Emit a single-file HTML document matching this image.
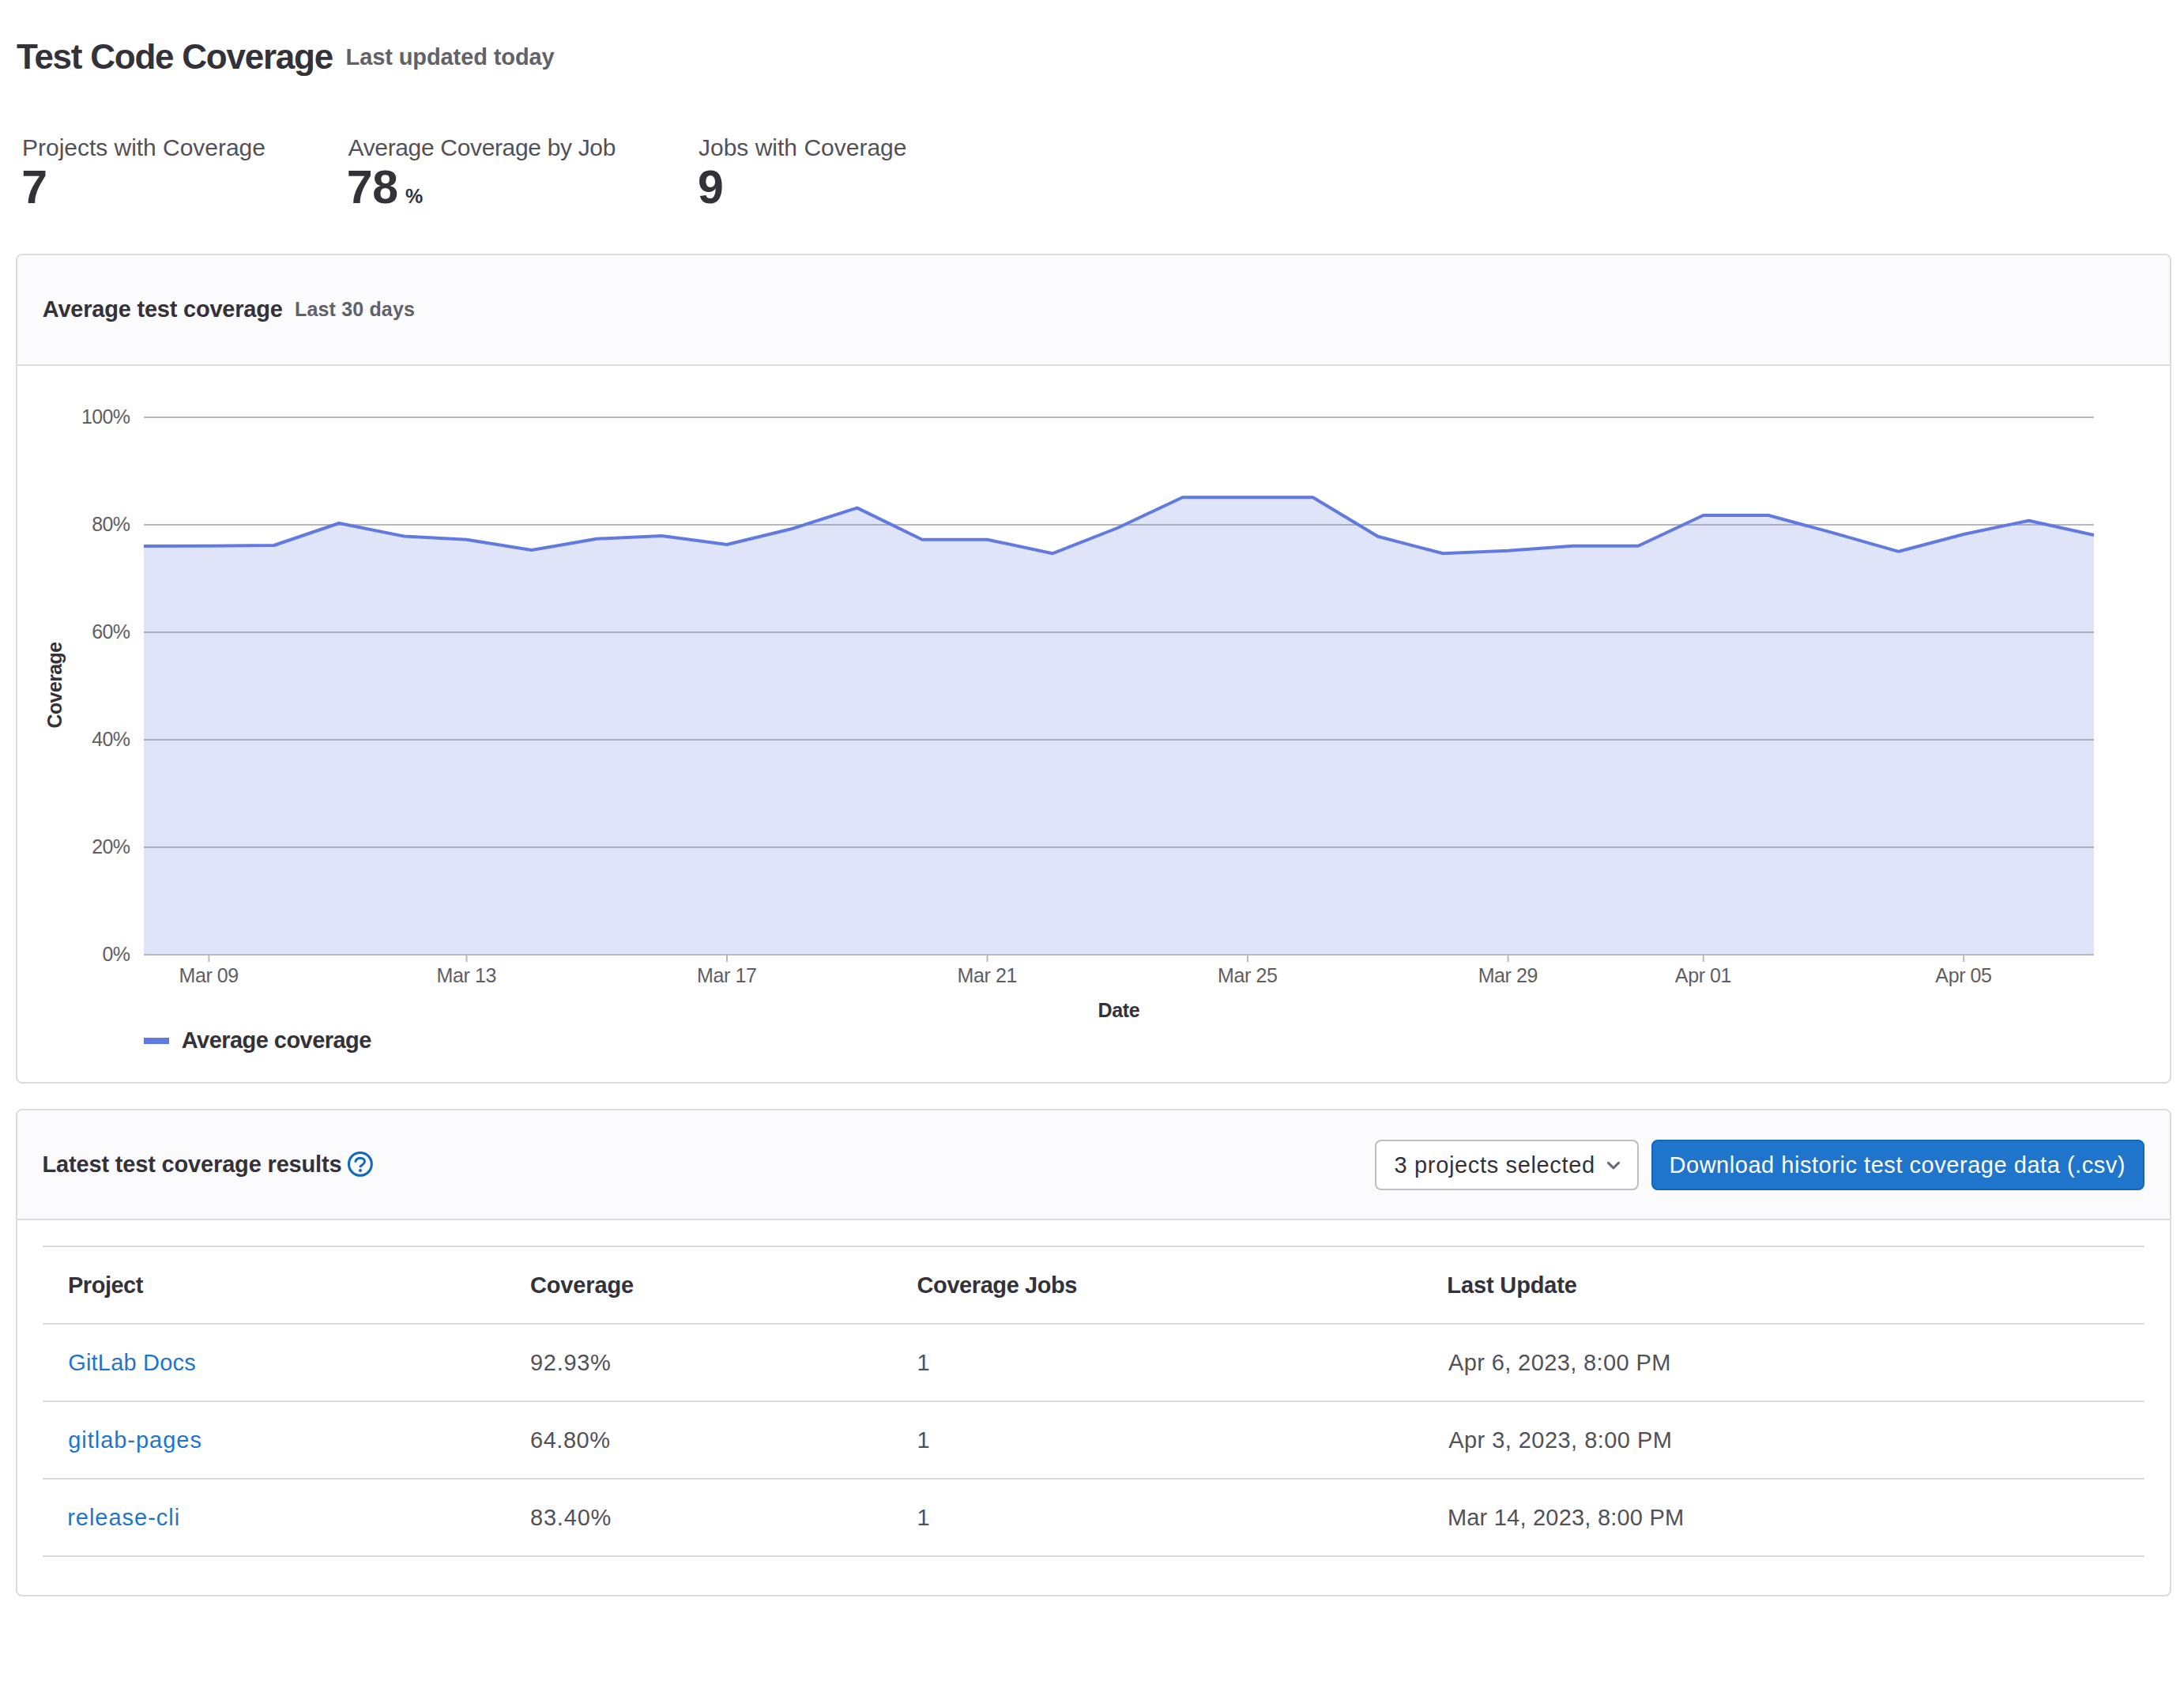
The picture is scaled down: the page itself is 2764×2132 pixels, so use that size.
<!DOCTYPE html>
<html><head><meta charset="utf-8"><title>Test Code Coverage</title>
<style>
html,body{margin:0;padding:0;background:#fff}
body{width:2764px;height:2132px;position:relative;overflow:hidden;font-family:"Liberation Sans", sans-serif}
.t{position:absolute;white-space:nowrap;line-height:1}
.r{position:absolute}
.card{position:absolute;border:2px solid #dcdcde;border-radius:8px;background:#fff}
</style></head><body>
<div class="card" style="left:20px;top:321px;width:2724px;height:1046px;"></div>
<div class="r" style="left:22px;top:323px;width:2724px;height:138px;background:#fbfafd;border-radius:6px 6px 0 0"></div>
<div class="r" style="left:22px;top:461px;width:2724px;height:2px;background:#dcdcde"></div>
<div class="card" style="left:20px;top:1403px;width:2724px;height:613px;"></div>
<div class="r" style="left:22px;top:1405px;width:2724px;height:137px;background:#fbfafd;border-radius:6px 6px 0 0"></div>
<div class="r" style="left:22px;top:1542px;width:2724px;height:2px;background:#dcdcde"></div>
<svg class="r" style="left:0;top:0" width="2764" height="1400" viewBox="0 0 2764 1400">
<rect x="182" y="527" width="2468" height="2" fill="#bab9be"/>
<rect x="182" y="663" width="2468" height="2" fill="#bab9be"/>
<rect x="182" y="799" width="2468" height="2" fill="#bab9be"/>
<rect x="182" y="935" width="2468" height="2" fill="#bab9be"/>
<rect x="182" y="1071" width="2468" height="2" fill="#bab9be"/>
<polygon points="182,1208 182.00,691.00 264.38,690.70 346.76,690.00 429.14,662.00 511.52,678.50 590.47,682.70 672.85,696.00 755.24,681.70 837.62,678.00 920.00,689.00 1002.38,669.00 1084.76,642.60 1167.14,682.70 1249.52,682.70 1331.90,700.30 1414.28,668.00 1496.66,629.20 1579.05,629.20 1661.43,629.20 1743.81,678.80 1826.19,700.30 1908.57,696.80 1990.95,690.70 2073.33,690.70 2155.71,652.00 2238.09,652.00 2320.48,674.40 2402.86,697.80 2485.24,676.00 2567.62,658.70 2650.00,677.00 2650,1208" fill="#617ae2" fill-opacity="0.2"/>
<rect x="182" y="1207" width="2468" height="2" fill="#bab9be"/>
<rect x="263.38" y="1209" width="2" height="8" fill="#bab9be"/>
<rect x="589.47" y="1209" width="2" height="8" fill="#bab9be"/>
<rect x="919.00" y="1209" width="2" height="8" fill="#bab9be"/>
<rect x="1248.52" y="1209" width="2" height="8" fill="#bab9be"/>
<rect x="1578.05" y="1209" width="2" height="8" fill="#bab9be"/>
<rect x="1907.57" y="1209" width="2" height="8" fill="#bab9be"/>
<rect x="2154.71" y="1209" width="2" height="8" fill="#bab9be"/>
<rect x="2484.24" y="1209" width="2" height="8" fill="#bab9be"/>
<polyline points="182.00,691.00 264.38,690.70 346.76,690.00 429.14,662.00 511.52,678.50 590.47,682.70 672.85,696.00 755.24,681.70 837.62,678.00 920.00,689.00 1002.38,669.00 1084.76,642.60 1167.14,682.70 1249.52,682.70 1331.90,700.30 1414.28,668.00 1496.66,629.20 1579.05,629.20 1661.43,629.20 1743.81,678.80 1826.19,700.30 1908.57,696.80 1990.95,690.70 2073.33,690.70 2155.71,652.00 2238.09,652.00 2320.48,674.40 2402.86,697.80 2485.24,676.00 2567.62,658.70 2650.00,677.00" fill="none" stroke="#617ae2" stroke-width="4" stroke-linejoin="round"/>
<rect x="182" y="1313" width="32" height="8" fill="#617ae2"/>
</svg>
<div class="t" style="right:2599.7px;top:514.5px;font-size:25px;color:#5f5e64;letter-spacing:-0.667px">100%</div>
<div class="t" style="right:2599.7px;top:650.5px;font-size:25px;color:#5f5e64;letter-spacing:-0.667px">80%</div>
<div class="t" style="right:2599.7px;top:786.5px;font-size:25px;color:#5f5e64;letter-spacing:-0.667px">60%</div>
<div class="t" style="right:2599.7px;top:922.5px;font-size:25px;color:#5f5e64;letter-spacing:-0.667px">40%</div>
<div class="t" style="right:2599.7px;top:1058.5px;font-size:25px;color:#5f5e64;letter-spacing:-0.667px">20%</div>
<div class="t" style="right:2599.7px;top:1194.5px;font-size:25px;color:#5f5e64;letter-spacing:-0.667px">0%</div>
<div class="t" style="left:114.2px;width:300px;text-align:center;top:1222.0px;font-size:25px;color:#5f5e64;letter-spacing:-0.400px">Mar 09</div>
<div class="t" style="left:440.3px;width:300px;text-align:center;top:1222.0px;font-size:25px;color:#5f5e64;letter-spacing:-0.400px">Mar 13</div>
<div class="t" style="left:769.8px;width:300px;text-align:center;top:1222.0px;font-size:25px;color:#5f5e64;letter-spacing:-0.400px">Mar 17</div>
<div class="t" style="left:1099.3px;width:300px;text-align:center;top:1222.0px;font-size:25px;color:#5f5e64;letter-spacing:-0.400px">Mar 21</div>
<div class="t" style="left:1428.8px;width:300px;text-align:center;top:1222.0px;font-size:25px;color:#5f5e64;letter-spacing:-0.400px">Mar 25</div>
<div class="t" style="left:1758.4px;width:300px;text-align:center;top:1222.0px;font-size:25px;color:#5f5e64;letter-spacing:-0.400px">Mar 29</div>
<div class="t" style="left:2005.5px;width:300px;text-align:center;top:1222.0px;font-size:25px;color:#5f5e64;letter-spacing:-0.400px">Apr 01</div>
<div class="t" style="left:2335.0px;width:300px;text-align:center;top:1222.0px;font-size:25px;color:#5f5e64;letter-spacing:-0.400px">Apr 05</div>
<div class="t" style="left:-80.2px;width:300px;text-align:center;top:853.5px;height:26px;font-size:25px;font-weight:700;color:#333238;letter-spacing:-0.63px;transform:rotate(-90deg)">Coverage</div>
<svg class="r" style="left:440px;top:1457px" width="32" height="32" viewBox="0 0 16 16"><circle cx="7.95" cy="7.95" r="7.2" fill="none" stroke="#1068bf" stroke-width="1.55"/><path d="M4.95 6.2C5.45 4.85 6.55 4.15 8 4.15c1.55 0 2.75.95 2.75 2.15 0 1-.7 1.6-1.45 2.15L8.05 9.4" fill="none" stroke="#1068bf" stroke-width="1.5" stroke-linecap="round" stroke-linejoin="round"/><circle cx="8" cy="11.95" r="1.0" fill="#1068bf"/></svg>
<div class="r" style="left:1740px;top:1442px;width:330px;height:60px;border:2px solid #bfbfc3;border-radius:8px;background:#fff"></div>
<svg class="r" style="left:2030px;top:1466px" width="24" height="18" viewBox="0 0 24 18"><path d="M5.4 5.4 L12 11.8 L18.5 5.4" fill="none" stroke="#6a696f" stroke-width="3" stroke-linecap="round" stroke-linejoin="round"/></svg>
<div class="r" style="left:2090px;top:1442px;width:620px;height:60px;border:2px solid #1068bf;border-radius:8px;background:#1f75cb"></div>
<div class="r" style="left:54px;top:1576px;width:2660px;height:2px;background:#dcdcde"></div>
<div class="r" style="left:54px;top:1674px;width:2660px;height:2px;background:#dcdcde"></div>
<div class="r" style="left:54px;top:1772px;width:2660px;height:2px;background:#dcdcde"></div>
<div class="r" style="left:54px;top:1870px;width:2660px;height:2px;background:#dcdcde"></div>
<div class="r" style="left:54px;top:1968px;width:2660px;height:2px;background:#dcdcde"></div>
<div class="t" style="left:21.0px;top:50.0px;font-size:44px;font-weight:700;color:#333238;letter-spacing:-1.235px">Test Code Coverage</div>
<div class="t" style="left:437.6px;top:58.0px;font-size:29px;font-weight:700;color:#626168;letter-spacing:-0.106px">Last updated today</div>
<div class="t" style="left:28.1px;top:171.8px;font-size:30px;font-weight:400;color:#535158;letter-spacing:-0.029px">Projects with Coverage</div>
<div class="t" style="left:440.5px;top:171.8px;font-size:30px;font-weight:400;color:#535158;letter-spacing:-0.341px">Average Coverage by Job</div>
<div class="t" style="left:884.0px;top:171.8px;font-size:30px;font-weight:400;color:#535158;letter-spacing:0.000px">Jobs with Coverage</div>
<div class="t" style="left:27.2px;top:208.0px;font-size:59px;font-weight:700;color:#333238;letter-spacing:0.000px">7</div>
<div class="t" style="left:438.8px;top:207.7px;font-size:59px;font-weight:700;color:#333238;letter-spacing:-0.400px">78</div>
<div class="t" style="left:513.0px;top:235.7px;font-size:25px;font-weight:700;color:#333238;letter-spacing:0.000px">%</div>
<div class="t" style="left:882.9px;top:208.0px;font-size:59px;font-weight:700;color:#333238;letter-spacing:0.000px">9</div>
<div class="t" style="left:53.8px;top:377.0px;font-size:29px;font-weight:700;color:#333238;letter-spacing:-0.220px">Average test coverage</div>
<div class="t" style="left:373.0px;top:379.0px;font-size:25px;font-weight:700;color:#626168;letter-spacing:0.164px">Last 30 days</div>
<div class="t" style="left:229.8px;top:1302.0px;font-size:29px;font-weight:700;color:#333238;letter-spacing:-0.547px">Average coverage</div>
<div class="t" style="left:53.5px;top:1459.0px;font-size:29px;font-weight:700;color:#333238;letter-spacing:-0.167px">Latest test coverage results</div>
<div class="t" style="left:1764.6px;top:1459.6px;font-size:29px;font-weight:400;color:#333238;letter-spacing:0.650px">3 projects selected</div>
<div class="t" style="left:2112.5px;top:1460.0px;font-size:29px;font-weight:400;color:#ffffff;letter-spacing:0.536px">Download historic test coverage data (.csv)</div>
<div class="t" style="left:86.0px;top:1612.0px;font-size:29px;font-weight:700;color:#333238;letter-spacing:-0.483px">Project</div>
<div class="t" style="left:671.0px;top:1612.0px;font-size:29px;font-weight:700;color:#333238;letter-spacing:-0.143px">Coverage</div>
<div class="t" style="left:1160.6px;top:1612.0px;font-size:29px;font-weight:700;color:#333238;letter-spacing:-0.425px">Coverage Jobs</div>
<div class="t" style="left:1831.3px;top:1612.0px;font-size:29px;font-weight:700;color:#333238;letter-spacing:-0.130px">Last Update</div>
<div class="t" style="left:86.2px;top:1710.0px;font-size:29px;font-weight:400;color:#1f75cb;letter-spacing:0.200px">GitLab Docs</div>
<div class="t" style="left:86.2px;top:1808.2px;font-size:29px;font-weight:400;color:#1f75cb;letter-spacing:0.973px">gitlab-pages</div>
<div class="t" style="left:85.2px;top:1906.0px;font-size:29px;font-weight:400;color:#1f75cb;letter-spacing:0.980px">release-cli</div>
<div class="t" style="left:671.0px;top:1710.0px;font-size:29px;font-weight:400;color:#535158;letter-spacing:0.700px">92.93%</div>
<div class="t" style="left:671.0px;top:1808.2px;font-size:29px;font-weight:400;color:#535158;letter-spacing:0.540px">64.80%</div>
<div class="t" style="left:671.0px;top:1906.0px;font-size:29px;font-weight:400;color:#535158;letter-spacing:0.800px">83.40%</div>
<div class="t" style="left:1160.4px;top:1710.0px;font-size:29px;font-weight:400;color:#535158;letter-spacing:0.000px">1</div>
<div class="t" style="left:1160.4px;top:1808.2px;font-size:29px;font-weight:400;color:#535158;letter-spacing:0.000px">1</div>
<div class="t" style="left:1160.4px;top:1906.0px;font-size:29px;font-weight:400;color:#535158;letter-spacing:0.000px">1</div>
<div class="t" style="left:1833.0px;top:1710.0px;font-size:29px;font-weight:400;color:#535158;letter-spacing:0.384px">Apr 6, 2023, 8:00 PM</div>
<div class="t" style="left:1833.2px;top:1808.2px;font-size:29px;font-weight:400;color:#535158;letter-spacing:0.453px">Apr 3, 2023, 8:00 PM</div>
<div class="t" style="left:1831.9px;top:1906.0px;font-size:29px;font-weight:400;color:#535158;letter-spacing:0.215px">Mar 14, 2023, 8:00 PM</div>
<div class="t" style="left:1389.6px;top:1266.0px;font-size:25px;font-weight:700;color:#333238;letter-spacing:-0.367px">Date</div>
<script>(function(){var w=window.innerWidth||2764;var z=w/2764;if(Math.abs(z-1)>0.02){document.documentElement.style.zoom=z;}})();</script>
</body></html>
